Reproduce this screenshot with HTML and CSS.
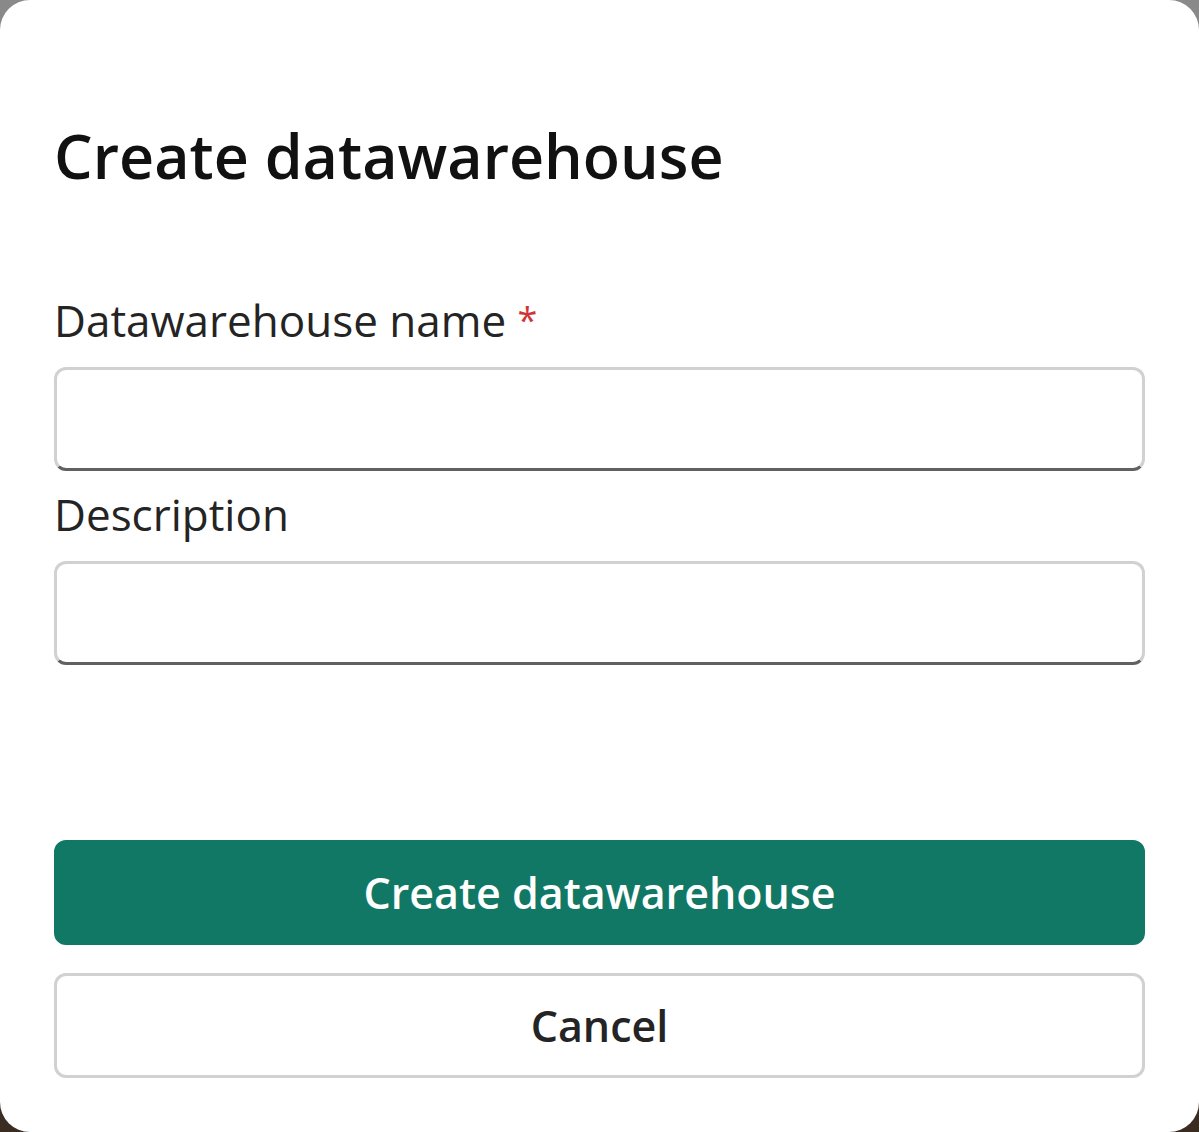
FILE: index.html
```html
<!DOCTYPE html>
<html lang="en">
<head>
    <meta charset="UTF-8">
    <meta name="viewport" content="width=device-width, initial-scale=1.0">
    <title>Create datawarehouse</title>
    <link rel="stylesheet" href="styles.css">
</head>
<body>
    <div class="dialog">
        <h2 class="title">Create datawarehouse</h2>
        <div class="field">
            <label for="whName">Datawarehouse name <span class="req">*</span></label>
            <input id="whName" type="text">
        </div>
        <div class="field">
            <label for="whDesc">Description</label>
            <input id="whDesc" type="text">
        </div>
        <div class="actions">
            <button class="btn primary">Create datawarehouse</button>
            <button class="btn">Cancel</button>
        </div>
    </div>
</body>
</html>
```

FILE: styles.css
```css
html, body {
    margin: 0;
    height: 100%;
}
body {
    font-family: "Open Sans", "Noto Sans", sans-serif;
    background: linear-gradient(#8a8a8a, #3b2c22);
    color: #242424;
}
.dialog {
    box-sizing: border-box;
    height: 100%;
    background: #fff;
    border-radius: 30px;
    padding: 112px 54px 54px 54px;
    display: flex;
    flex-direction: column;
}
.title {
    margin: 0 0 90px 0;
    font-size: 61px;
    line-height: 88px;
    font-weight: 600;
    color: #111;
}
.field {
    display: flex;
    flex-direction: column;
}
.field + .field {
    margin-top: 13px;
}
.field label {
    font-size: 44px;
    line-height: 60px;
    margin-bottom: 17px;
}
.req {
    color: #d13438;
    font-size: 36px;
    line-height: 0;
    vertical-align: 4px;
}
.field input {
    box-sizing: border-box;
    height: 104px;
    border: 3px solid #d1d1d1;
    border-bottom-color: #616161;
    border-radius: 12px;
    font: inherit;
    font-size: 44px;
    padding: 0 30px;
    outline: none;
}
.actions {
    margin-top: auto;
    display: flex;
    flex-direction: column;
    gap: 28px;
}
.btn {
    box-sizing: border-box;
    height: 105px;
    border: 3px solid #d1d1d1;
    border-radius: 12px;
    background: #fff;
    color: #242424;
    font-family: inherit;
    font-size: 43px;
    font-weight: 600;
    cursor: pointer;
}
.btn.primary {
    background: #117865;
    border-color: #117865;
    color: #fff;
}
```
